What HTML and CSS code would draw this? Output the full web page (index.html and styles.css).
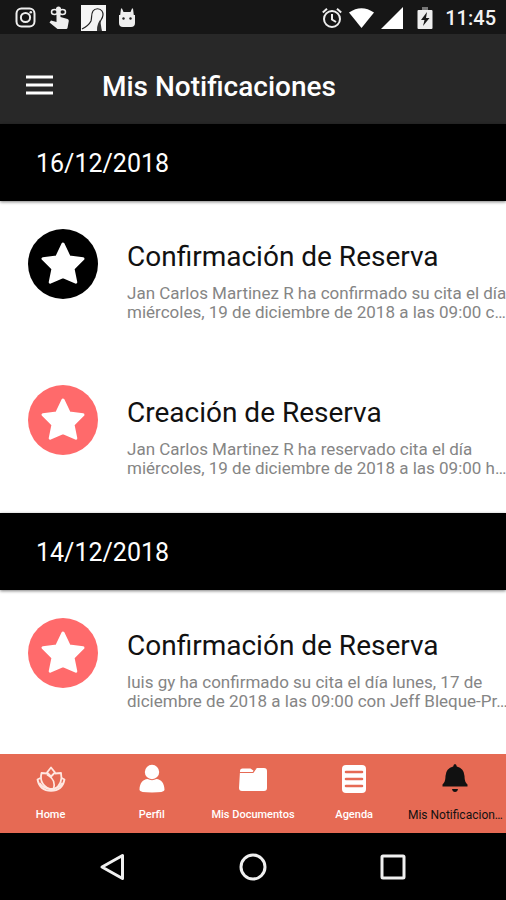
FILE: index.html
```html
<!DOCTYPE html>
<html lang="es">
<head>
<meta charset="utf-8">
<meta name="viewport" content="width=device-width, initial-scale=1">
<title>Mis Notificaciones</title>
<link rel="stylesheet" href="styles.css">
</head>
<body>
<svg class="defs" aria-hidden="true">
  <symbol id="star" viewBox="0 0 70 70">
    <path d="M35 15 L41.2 28 L55 29.8 L45 39.6 L47.8 53.2 L35 47.6 L22.2 53.2 L25 39.6 L15 29.8 L28.8 28 Z" fill="#fff" stroke="#fff" stroke-width="3" stroke-linejoin="round"/>
  </symbol>
</svg>

<div class="status">
  <div class="status-group">
    <svg class="s-insta" viewBox="0 0 22 22"><rect x="1.5" y="1.5" width="18" height="18" rx="5" fill="none" stroke="#eee" stroke-width="2"/><circle cx="10.5" cy="10.5" r="4.6" fill="none" stroke="#eee" stroke-width="2"/><circle cx="15.8" cy="5.3" r="1.3" fill="#eee"/></svg>
    <svg class="s-touch" viewBox="0 0 20 24"><path d="M7.5 2h4v9l7 2q1.500.500 1.300 2L18.500 22q-.3 1-1.300 1H8.500L.5 16.500 2 14.500l5.500 1.500z" fill="#eee"/><ellipse cx="5.500" cy="6" rx="3" ry="2.500" fill="none" stroke="#eee" stroke-width="1.500"/><ellipse cx="13.500" cy="6" rx="3" ry="2.500" fill="none" stroke="#eee" stroke-width="1.500"/><circle cx="9.500" cy="3" r="2.500" fill="#eee"/></svg>
    <svg class="s-photo" viewBox="0 0 25 26"><path d="M0 0h25v26H0z" fill="#f5f5f5"/><path d="M1 24c4-2 7-4 9-8 1-3 0-7 2-10 2-3 7-3 9 0s1 6-1 9c-2 3-3 6-3 10" fill="none" stroke="#222" stroke-width="1.200"/><path d="M19 15c-2 3-3 6-3 11h5c-1-4-1-7-2-11z" fill="#333"/></svg>
    <svg class="s-droid" viewBox="0 0 18 20"><path d="M1 7h1.200L3 .5h1L5.500 4h7L14 .5h1L15.800 7H17v8q0 4-4 4H5q-4 0-4-4z" fill="#eee"/><circle cx="5.500" cy="10.500" r="1.200" fill="#222"/><circle cx="12.500" cy="10.500" r="1.200" fill="#222"/></svg>
  </div>
  <div class="status-group status-right">
    <svg class="s-alarm" viewBox="0 0 20 22"><circle cx="10" cy="12" r="8" fill="none" stroke="#eee" stroke-width="2"/><path d="M.8 5.500 5 1.800M19.200 5.500 15 1.800M10 7v5.500l4 2.500" fill="none" stroke="#eee" stroke-width="2"/></svg>
    <svg class="s-wifi" viewBox="0 0 25 20"><path d="M0 4.500Q12.500-4 25 4.500L12.500 20z" fill="#fff"/></svg>
    <svg class="s-cell" viewBox="0 0 22 22"><path d="M22 0v22H0z" fill="#fff"/></svg>
    <svg class="s-batt" viewBox="0 0 16 22"><path d="M5 0h6v3H5z" fill="#777"/><path d="M1.500 3h13q1 0 1 1v17q0 1-1 1h-13q-1 0-1-1V4q0-1 1-1z" fill="#eee"/><path d="M10 5 4 13h3.500L6 19l6.500-8H9z" fill="#1a1a1a"/></svg>
    <span class="clock">11:45</span>
  </div>
</div>

<header class="appbar">
  <button class="menu" type="button" aria-label="Menú"><svg viewBox="0 0 27 20"><path d="M0 2h27M0 10h27M0 18h27" stroke="#fff" stroke-width="3"/></svg></button>
  <h1>Mis Notificaciones</h1>
</header>

<main>
  <section>
    <h2 class="date">16/12/2018</h2>
    <article class="item">
      <svg class="badge badge-dark"><use href="#star"/></svg>
      <div class="text">
        <h3>Confirmación de Reserva</h3>
        <p>Jan Carlos Martinez R ha confirmado su cita el día<br>miércoles, 19 de diciembre de 2018 a las 09:00 c…</p>
      </div>
    </article>
    <article class="item">
      <svg class="badge"><use href="#star"/></svg>
      <div class="text">
        <h3>Creación de Reserva</h3>
        <p>Jan Carlos Martinez R ha reservado cita el día<br>miércoles, 19 de diciembre de 2018 a las 09:00 h…</p>
      </div>
    </article>
  </section>
  <section>
    <h2 class="date">14/12/2018</h2>
    <article class="item">
      <svg class="badge"><use href="#star"/></svg>
      <div class="text">
        <h3>Confirmación de Reserva</h3>
        <p>luis gy ha confirmado su cita el día lunes, 17 de<br>diciembre de 2018 a las 09:00 con Jeff Bleque-Pr…</p>
      </div>
    </article>
  </section>
</main>

<nav class="tabs">
  <a href="#home"><svg viewBox="0 0 30 30" fill="none" stroke="#ffe8e2" stroke-width="1.800" stroke-linejoin="round"><path d="M15 3.500 19 8.500 15 12.500 11 8.500z"/><path d="M11 9.500 5.500 9C3.500 17 7 24 17.500 26 19.500 19 18 14.500 11 10.500"/><path d="M19 9.500 25 9c1.500 7-1 13-7 16.500"/><path d="M4.500 14 1.500 15.500C3 23 8 26.800 15 26.800S27 23 28.500 15.500L25.500 14"/><path d="M3.500 19C6.500 23.500 10 25 15 25s8.500-1.500 11.500-6"/></svg><span>Home</span></a>
  <a href="#perfil"><svg viewBox="0 0 30 30" fill="#fff"><circle cx="15" cy="8" r="7.200"/><path d="M2.500 26c0-7 3.500-10.500 8-11 3 1.500 6 1.500 9 0 4.500.500 8 4 8 11q0 2.500-12.500 2.500T2.500 26z"/></svg><span>Perfil</span></a>
  <a href="#documentos"><svg viewBox="0 0 30 30"><path d="M2 7q0-2.500 2.500-2.500h8L16 7l2-3h8q3 0 3 3v17q0 3-3 3H4q-3 0-3-3z" fill="#fff"/><path d="M1 8.500h14l3.500-5" fill="none" stroke="#e66a54" stroke-width="1.200"/></svg><span>Mis Documentos</span></a>
  <a href="#agenda"><svg viewBox="0 0 30 30"><rect x="3" y="1" width="24" height="28" rx="4" fill="#fff"/><path d="M7 8h16M7 15h16M7 22h16" stroke="#e66a54" stroke-width="2.600" stroke-linecap="round"/></svg><span>Agenda</span></a>
  <a href="#notificaciones" class="active" aria-current="page"><svg viewBox="0 0 30 30" fill="#111"><path d="M15 0q1.500 0 1.800 2.500Q24 4 24.500 12c.2 5 1 6.500 3 8.500v2H2.500v-2c2-2 2.800-3.500 3-8.500Q6 4 13.200 2.500 13.500 0 15 0z"/><path d="M12 25h6q-.5 3-3 3t-3-3z"/></svg><span>Mis Notificacion…</span></a>
</nav>

<div class="system">
  <button type="button" aria-label="Atrás"><svg viewBox="0 0 28 28"><path d="M23.500 2.500v23L3 14z"/></svg></button>
  <button type="button" aria-label="Inicio"><svg viewBox="0 0 28 28"><circle cx="14" cy="14" r="12"/></svg></button>
  <button type="button" aria-label="Recientes"><svg viewBox="0 0 28 28"><rect x="3" y="3" width="22" height="22" rx="1"/></svg></button>
</div>
</body>
</html>
```
FILE: styles.css
```css
* { box-sizing: border-box; }
body {
  margin: 0;
  min-height: 100vh;
  display: flex;
  flex-direction: column;
  background: #fff;
  font-family: Roboto, "Liberation Sans", sans-serif;
  overflow-x: hidden;
}
h1, h2, h3, p { margin: 0; font-weight: 400; white-space: nowrap; }
button { padding: 0; border: 0; background: none; }
svg { display: block; flex: none; }
.defs { position: absolute; width: 0; height: 0; }

.status {
  display: flex;
  justify-content: space-between;
  align-items: center;
  height: 34px;
  padding: 1px 10px 0 15px;
  background: #161616;
}
.status-group { display: flex; align-items: center; gap: 12px; }
.status-right { gap: 7px; }
.s-insta { width: 22px; height: 22px; }
.s-touch { width: 20px; height: 24px; }
.s-photo { width: 25px; height: 26px; }
.s-droid { width: 18px; height: 20px; }
.s-alarm { width: 20px; height: 22px; }
.s-wifi { width: 25px; height: 20px; }
.s-cell { width: 22px; height: 22px; }
.s-batt { width: 16px; height: 22px; margin: 0 5px 0 7px; }
.clock { color: #f2f2f2; font-size: 20px; font-weight: 500; line-height: 24px; }

.appbar {
  display: flex;
  align-items: center;
  gap: 49px;
  height: 90px;
  padding: 16px 26px 0;
  background: #282828;
}
.menu svg { width: 27px; height: 20px; margin-bottom: 5px; }
h1 { color: #fff; font-size: 28px; font-weight: 500; line-height: 36px; }

main { flex: 1; }
.date {
  height: 77px;
  padding: 0 36px;
  background: #000;
  color: #fff;
  font-size: 25px;
  line-height: 80px;
  box-shadow: 0 1px 3px rgba(0, 0, 0, 0.5);
}
.item {
  display: flex;
  gap: 29px;
  height: 156px;
  padding: 28px 0 0 28px;
}
.badge { width: 70px; height: 70px; border-radius: 50%; background: #ff6a6b; }
.badge-dark { background: #000; }
.text { padding-top: 10px; }
h3 { color: #111; font-size: 28px; line-height: 36px; }
p { margin-top: 9px; color: #858585; font-size: 17px; line-height: 19px; }

.tabs {
  display: grid;
  grid-template-columns: repeat(5, 1fr);
  height: 79px;
  background: #e66a54;
}
.tabs a {
  display: flex;
  flex-direction: column;
  align-items: center;
  gap: 13px;
  padding-top: 10px;
  color: #fff;
  font-size: 11px;
  font-weight: 500;
  line-height: 16px;
  text-decoration: none;
  white-space: nowrap;
}
.tabs svg { width: 30px; height: 30px; }
.tabs .active { color: #111; font-size: 12px; font-weight: 400; }

.system {
  display: flex;
  justify-content: center;
  align-items: center;
  gap: 112px;
  height: 67px;
  background: #000;
}
.system svg { width: 28px; height: 28px; fill: none; stroke: #f0f0f0; stroke-width: 3; stroke-linejoin: round; }
```
